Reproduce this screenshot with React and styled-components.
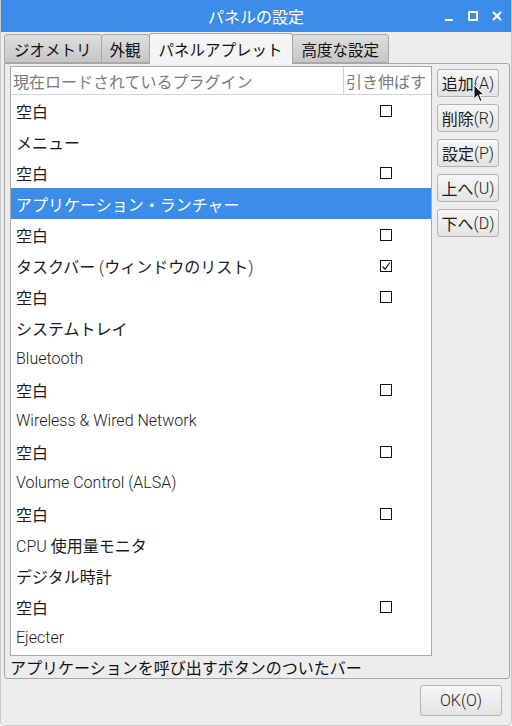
import React from "react";
import styled, { createGlobalStyle } from "styled-components";

const GlobalStyle = createGlobalStyle`
  html, body {
    margin: 0;
    padding: 0;
    background: #ffffff;
  }
  body {
    font-family: Roboto, "Noto Sans CJK JP", sans-serif;
    font-size: 16px;
    color: #1a1a1a;
  }
`;

const BLUE = "#3c8de9";

const PLUGINS = [
  { name: "空白", stretch: false },
  { name: "メニュー" },
  { name: "空白", stretch: false },
  { name: "アプリケーション・ランチャー", selected: true },
  { name: "空白", stretch: false },
  { name: "タスクバー (ウィンドウのリスト)", stretch: true },
  { name: "空白", stretch: false },
  { name: "システムトレイ" },
  { name: "Bluetooth" },
  { name: "空白", stretch: false },
  { name: "Wireless & Wired Network" },
  { name: "空白", stretch: false },
  { name: "Volume Control (ALSA)" },
  { name: "空白", stretch: false },
  { name: "CPU 使用量モニタ" },
  { name: "デジタル時計" },
  { name: "空白", stretch: false },
  { name: "Ejecter" },
];

const TABS = [
  { label: "ジオメトリ", pad: 9 },
  { label: "外観", pad: 8 },
  { label: "パネルアプレット", pad: 9, active: true },
  { label: "高度な設定", pad: 9 },
];
const SIDE_BUTTONS = ["追加(A)", "削除(R)", "設定(P)", "上へ(U)", "下へ(D)"];

// latin runs are drawn lighter than the japanese ones
const Latin = styled.span`
  font-weight: 300;
`;

function Mixed({ text }) {
  const parts = text.split(/([\x20-\x7E]+)/).filter(Boolean);
  return parts.map((s, i) =>
    /^[\x20-\x7E]+$/.test(s) ? <Latin key={i}>{s}</Latin> : <span key={i}>{s}</span>
  );
}

const Window = styled.div`
  width: 512px;
  height: 726px;
  box-sizing: border-box;
  display: flex;
  flex-direction: column;
  background: #ededed;
  border: 1px solid #c9c9c9;
  border-top: none;
  border-radius: 0 0 5px 5px;
  overflow: hidden;
  position: relative;
`;

const TitleBar = styled.div`
  height: 32px;
  margin: 0 -1px;
  background: ${BLUE};
  color: #ffffff;
  display: flex;
  align-items: center;
  justify-content: center;
  position: relative;
  font-size: 16px;
`;

const Controls = styled.div`
  position: absolute;
  right: 8px;
  top: 0;
  height: 32px;
  display: flex;
  align-items: center;
  gap: 10px;
`;

const Tabs = styled.div`
  display: flex;
  align-items: flex-end;
  height: 31px;
  padding-left: 3px;
`;

const Tab = styled.div`
  height: ${(p) => (p.$active ? "31px" : "29px")};
  box-sizing: border-box;
  padding: 0 ${(p) => p.$pad}px;
  margin-right: -1px;
  display: flex;
  align-items: center;
  font-size: 15.5px;
  color: #111;
  border: 1px solid #a7a7a7;
  border-bottom: ${(p) => (p.$active ? "none" : "1px solid #a7a7a7")};
  border-radius: 3px 3px 0 0;
  background: ${(p) =>
    p.$active ? "#f4f4f4" : "linear-gradient(#dedede, #c6c6c6)"};
  position: relative;
  z-index: ${(p) => (p.$active ? 2 : 1)};
  margin-bottom: ${(p) => (p.$active ? "-1px" : "0")};
  white-space: nowrap;
`;

const Panel = styled.div`
  margin: 0 1px 0 3px;
  height: 616px;
  box-sizing: border-box;
  border: 1px solid #a7a7a7;
  border-radius: 0 3px 3px 3px;
  padding: 2px 0 0 5px;
  display: flex;
  gap: 5px;
`;

const MainCol = styled.div`
  display: flex;
  flex-direction: column;
  width: 422px;
`;

const List = styled.div`
  height: 590px;
  box-sizing: border-box;
  background: #ffffff;
  border: 1px solid #a9a9a9;
  overflow: hidden;
`;

const Header = styled.div`
  display: flex;
  height: 27px;
  border-bottom: 1px solid #d4d4d4;
  color: #7a7a7a;
`;

const HeaderCell = styled.div`
  display: flex;
  align-items: center;
  padding-left: 2px;
  width: ${(p) => p.$w}px;
  box-sizing: border-box;
  border-right: ${(p) => (p.$sep ? "1px solid #d4d4d4" : "none")};
  white-space: nowrap;
`;

const Row = styled.div`
  display: flex;
  align-items: center;
  height: 31px;
  background: ${(p) => (p.$selected ? BLUE : "transparent")};
  color: ${(p) => (p.$selected ? "#ffffff" : "#1a1a1a")};
`;

const NameCell = styled.div`
  width: 332px;
  padding-left: 5px;
  box-sizing: border-box;
  white-space: nowrap;
`;

const CheckCell = styled.div`
  flex: 1;
  display: flex;
  justify-content: center;
  padding-right: 2px;
`;

const Check = styled.div`
  width: 10px;
  height: 10px;
  border: 1px solid #111;
  background: #fff;
  display: flex;
  align-items: center;
  justify-content: center;
`;

const Status = styled.div`
  height: 22px;
  display: flex;
  align-items: center;
  color: #111;
  white-space: nowrap;
`;

const SideCol = styled.div`
  display: flex;
  flex-direction: column;
  gap: 7px;
  padding-top: 3px;
  position: relative;
`;

const Button = styled.button`
  font-family: Roboto, "Noto Sans CJK JP", sans-serif;
  font-size: 16px;
  color: #1a1a1a;
  height: ${(p) => p.$h || 28}px;
  width: ${(p) => p.$w || 62}px;
  padding: 0;
  border: 1px solid #b3b3b3;
  border-radius: 3px;
  background: linear-gradient(#f7f7f7, #e3e3e3);
  display: flex;
  align-items: center;
  justify-content: center;
  white-space: nowrap;
`;

const Footer = styled.div`
  flex: 1;
  display: flex;
  justify-content: flex-end;
  align-items: flex-start;
  padding: 6px 9px 0 0;
`;

const Cursor = styled.svg`
  position: absolute;
  left: 36px;
  top: 18px;
`;

function Tick() {
  return (
    <svg width="10" height="10" viewBox="0 0 10 10">
      <path d="M1.5 5.5 L4 8 L9 1.5" fill="none" stroke="#111" strokeWidth="1.2" />
    </svg>
  );
}

function WindowControls() {
  return (
    <Controls>
      <svg width="14" height="14" viewBox="0 0 14 14">
        <rect x="3" y="10" width="8" height="2" fill="#fff" />
      </svg>
      <svg width="14" height="14" viewBox="0 0 14 14">
        <rect x="3" y="3" width="8" height="8" fill="none" stroke="#fff" strokeWidth="2" />
      </svg>
      <svg width="14" height="14" viewBox="0 0 14 14">
        <path d="M3 3 L11 11 M11 3 L3 11" stroke="#fff" strokeWidth="2.2" />
      </svg>
    </Controls>
  );
}

export default function App() {
  return (
    <Window>
      <GlobalStyle />
      <TitleBar>
        パネルの設定
        <WindowControls />
      </TitleBar>
      <Tabs>
        {TABS.map((t) => (
          <Tab key={t.label} $active={t.active} $pad={t.pad}>
            {t.label}
          </Tab>
        ))}
      </Tabs>
      <Panel>
        <MainCol>
          <List>
            <Header>
              <HeaderCell $w={333} $sep>
                現在ロードされているプラグイン
              </HeaderCell>
              <HeaderCell>引き伸ばす</HeaderCell>
            </Header>
            {PLUGINS.map((p, i) => (
              <Row key={i} $selected={p.selected}>
                <NameCell>
                  <Mixed text={p.name} />
                </NameCell>
                <CheckCell>
                  {p.stretch !== undefined && (
                    <Check>{p.stretch && <Tick />}</Check>
                  )}
                </CheckCell>
              </Row>
            ))}
          </List>
          <Status>アプリケーションを呼び出すボタンのついたバー</Status>
        </MainCol>
        <SideCol>
          {SIDE_BUTTONS.map((b) => (
            <Button key={b}>
              <Mixed text={b} />
            </Button>
          ))}
          <Cursor width="12" height="20" viewBox="0 0 12 20">
            <path
              d="M1 1 L1 15 L4.5 11.5 L7 17.5 L9 16.5 L6.5 10.8 L11 10.8 Z"
              fill="#111"
              stroke="#fff"
              strokeWidth="1"
            />
          </Cursor>
        </SideCol>
      </Panel>
      <Footer>
        <Button $w={82} $h={31}>
          <Mixed text="OK(O)" />
        </Button>
      </Footer>
    </Window>
  );
}
